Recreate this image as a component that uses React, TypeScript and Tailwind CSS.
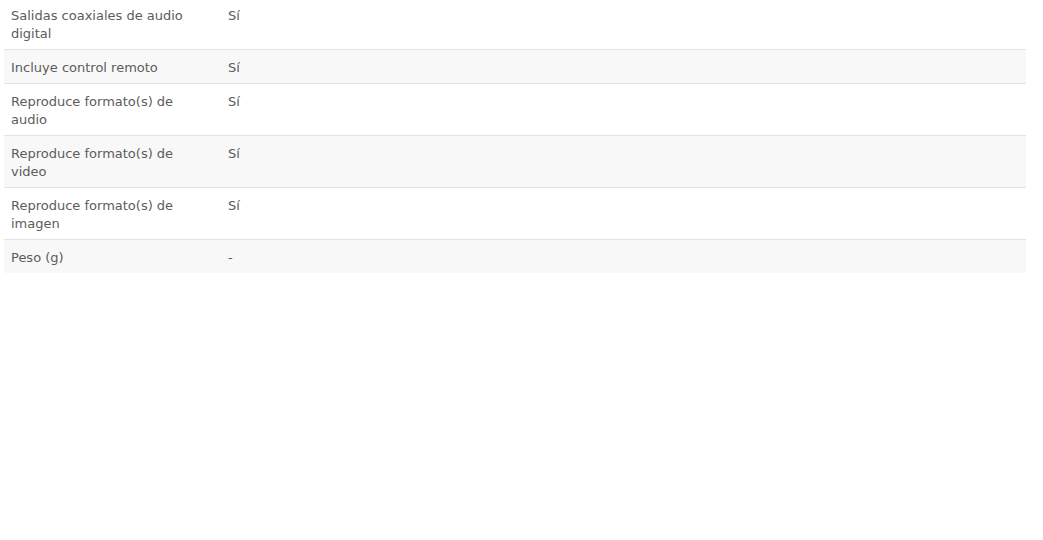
const specs: [string, string][] = [
  ['Salidas coaxiales de audio digital', 'Sí'],
  ['Incluye control remoto', 'Sí'],
  ['Reproduce formato(s) de audio', 'Sí'],
  ['Reproduce formato(s) de video', 'Sí'],
  ['Reproduce formato(s) de imagen', 'Sí'],
  ['Peso (g)', '-'],
]

export default function App() {
  return (
    <div className="min-h-[540px] bg-white pl-1 pr-[17px]" style={{ fontFamily: '"DejaVu Sans", Verdana, sans-serif' }}>
      <div className="-mt-[2px] flex flex-col">
        {specs.map(([label, value], i) => (
          <div
            key={label}
            className={`flex border-[#e3e3e3] text-[13px] leading-[18px] text-[#5c5c5c] ${
              i % 2 === 1 ? 'bg-[#f8f8f8]' : 'bg-white'
            } ${i < specs.length - 1 ? 'border-b' : ''} pt-[9px] pb-[6px]`}
          >
            <div className="w-[224px] shrink-0 pl-[7px] pr-[20px]">{label}</div>
            <div className="flex-1">{value}</div>
          </div>
        ))}
      </div>
    </div>
  )
}
